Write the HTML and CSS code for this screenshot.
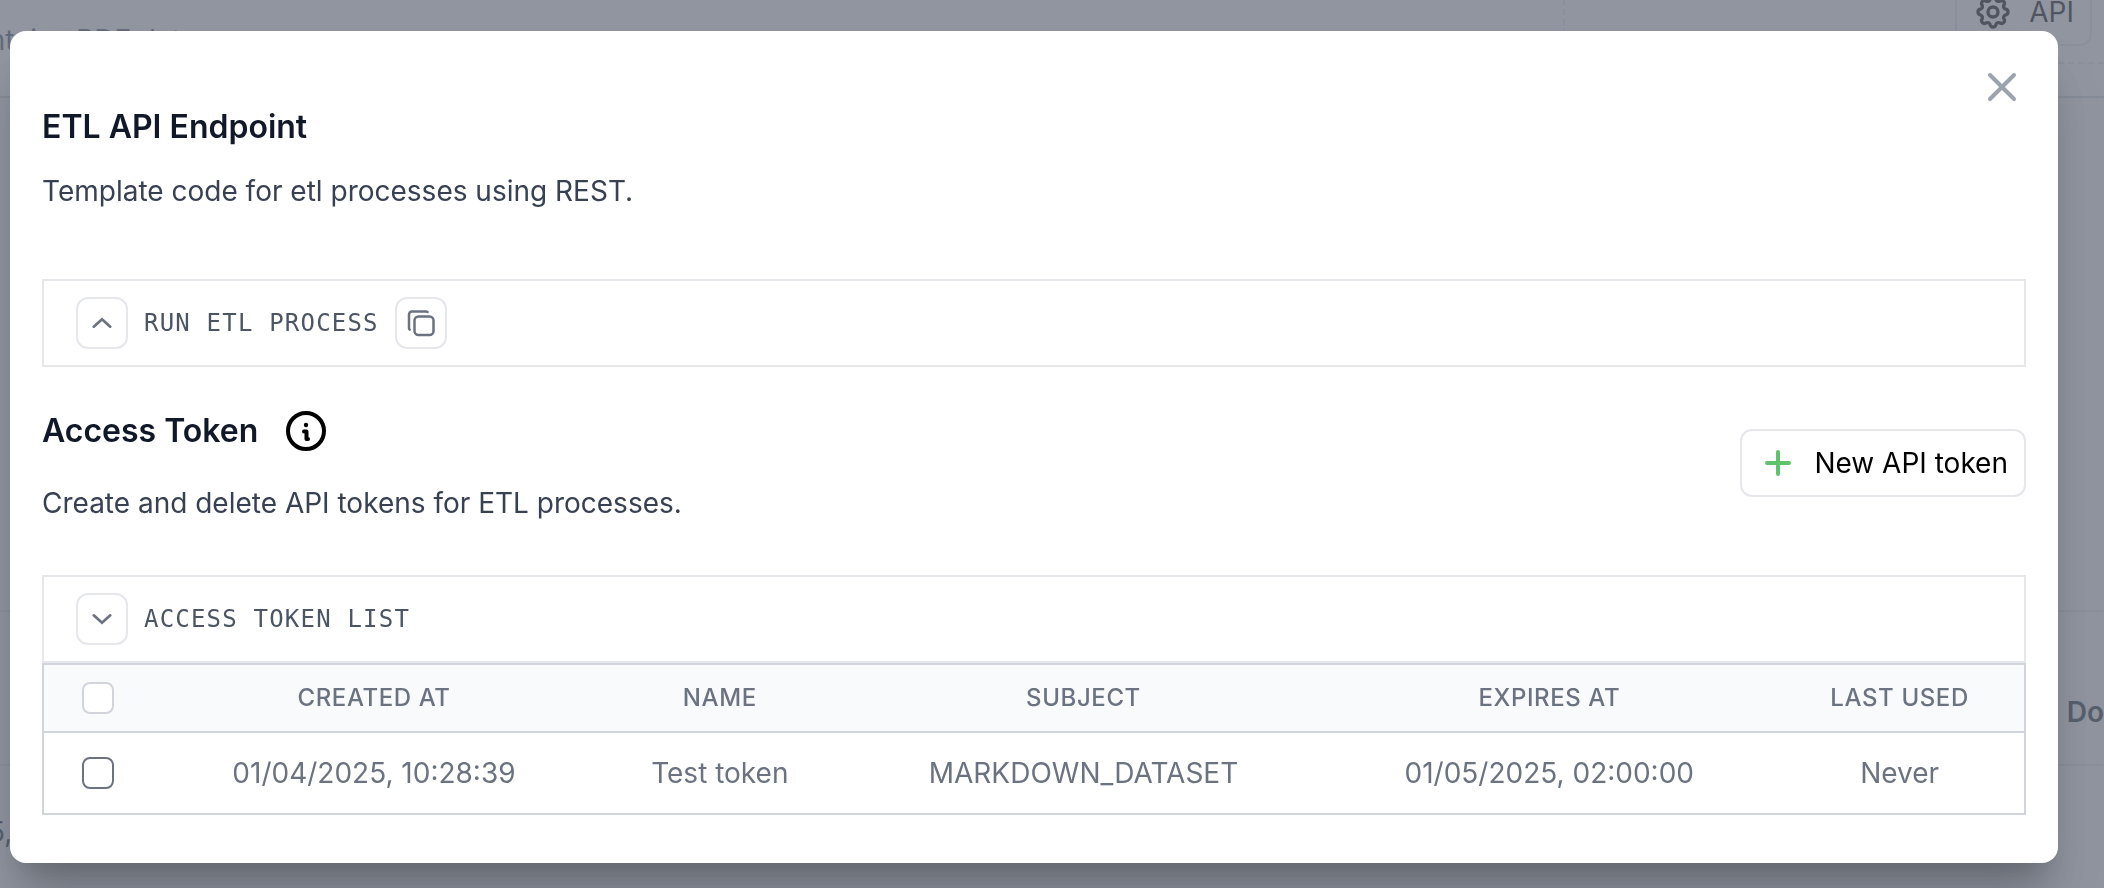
FILE: index.html
```
<!DOCTYPE html>
<html lang="en">
<head>
    <meta charset="UTF-8">
    <title>ETL API Endpoint</title>
    <link rel="stylesheet" href="styles.css">
</head>
<body>

<div class="page">
    <div class="page-header">
        <p class="page-description">contains PDF data</p>
        <div class="page-actions">
            <button class="btn" type="button">
                <svg class="icon-gear" viewBox="0 0 24 24" fill="none" stroke="currentColor" stroke-width="2">
                    <path d="M10.325 4.317c.426-1.756 2.924-1.756 3.35 0a1.724 1.724 0 002.573 1.066c1.543-.94 3.31.826 2.37 2.37a1.724 1.724 0 001.065 2.572c1.756.426 1.756 2.924 0 3.35a1.724 1.724 0 00-1.066 2.573c.94 1.543-.826 3.31-2.37 2.37a1.724 1.724 0 00-2.572 1.065c-.426 1.756-2.924 1.756-3.35 0a1.724 1.724 0 00-2.573-1.066c-1.543.94-3.31-.826-2.37-2.37a1.724 1.724 0 00-1.065-2.572c-1.756-.426-1.756-2.924 0-3.35a1.724 1.724 0 001.066-2.573c-.94-1.543.826-3.31 2.37-2.37.996.608 2.296.07 2.572-1.065z"/>
                    <circle cx="12" cy="12" r="3"/>
                </svg>
                API
            </button>
        </div>
    </div>
    <div class="page-content"></div>
    <div class="page-row page-row-head"><span>Do</span></div>
    <div class="page-row"><span class="page-date">5,</span></div>
</div>

<div class="overlay">
    <div class="modal" role="dialog" aria-labelledby="modal_title">
        <button class="close" type="button" aria-label="Close">
            <svg viewBox="0 0 24 24" fill="none" stroke="currentColor" stroke-width="2" stroke-linecap="round">
                <path d="M6 18L18 6M6 6l12 12"/>
            </svg>
        </button>

        <h3 class="title" id="modal_title">ETL API Endpoint</h3>
        <p class="text">Template code for etl processes using REST.</p>

        <div class="panel panel-code">
            <button class="btn-icon" type="button" aria-label="Show code">
                <svg class="icon-chevron" viewBox="0 0 24 24" fill="none" stroke="currentColor" stroke-width="3" stroke-linecap="round">
                    <path d="M3 16l9-8 9 8"/>
                </svg>
            </button>
            <span class="panel-label">Run ETL process</span>
            <button class="btn-icon" type="button" aria-label="Copy">
                <svg class="icon-copy" viewBox="0 0 32 32" fill="none" stroke="currentColor" stroke-width="2.5" stroke-linecap="round">
                    <rect x="9.500" y="9.500" width="19" height="18.500" rx="4"/>
                    <path d="M22.500 5a3 3 0 0 0-1.500-.5H7a3 3 0 0 0-3 3V21c0 .8.3 1.300.7 1.700"/>
                </svg>
            </button>
        </div>

        <div class="token-header">
            <div>
                <div class="token-title">
                    <h3 class="title">Access Token</h3>
                    <svg class="icon-info" viewBox="0 0 40 40" fill="none" stroke="currentColor" stroke-width="4" stroke-linecap="round" stroke-linejoin="round">
                        <circle cx="20" cy="20" r="18"/>
                        <circle cx="20" cy="14" r="2.200" fill="currentColor" stroke="none"/>
                        <path d="M18 20.500h2.500v7.500h1.500"/>
                    </svg>
                </div>
                <p class="text">Create and delete API tokens for ETL processes.</p>
            </div>
            <button class="btn" type="button">
                <svg class="icon-plus" viewBox="0 0 32 32" fill="none" stroke="currentColor" stroke-width="4" stroke-linecap="round">
                    <path d="M16 5v22M5 16h22"/>
                </svg>
                New API token
            </button>
        </div>

        <div class="panel">
            <button class="btn-icon" type="button" aria-label="Hide token list">
                <svg class="icon-chevron" viewBox="0 0 24 24" fill="none" stroke="currentColor" stroke-width="3" stroke-linecap="round">
                    <path d="M3 8l9 8 9-8"/>
                </svg>
            </button>
            <span class="panel-label">Access token list</span>
        </div>
        <table class="tokens">
            <colgroup>
                <col class="col-check">
                <col class="col-created">
                <col class="col-name">
                <col class="col-subject">
                <col class="col-expires">
                <col class="col-used">
            </colgroup>
            <thead>
            <tr>
                <th><input class="check" type="checkbox" aria-label="Select all tokens"></th>
                <th>Created at</th>
                <th>Name</th>
                <th>Subject</th>
                <th>Expires at</th>
                <th>Last used</th>
            </tr>
            </thead>
            <tbody>
            <tr>
                <td><input class="check" type="checkbox" aria-label="Select Test token"></td>
                <td>01/04/2025, 10:28:39</td>
                <td>Test token</td>
                <td>MARKDOWN_DATASET</td>
                <td>01/05/2025, 02:00:00</td>
                <td>Never</td>
            </tr>
            </tbody>
        </table>
    </div>
</div>

</body>
</html>
```

FILE: styles.css
```
* {
    box-sizing: border-box;
}
body {
    margin: 0;
    height: 100vh;
    overflow: hidden;
    font-family: Inter, sans-serif;
    font-size: 28px;
    line-height: 40px;
    color: #374151;
}
h3, p {
    margin: 0;
}
button {
    font: inherit;
    cursor: pointer;
}
svg {
    display: block;
    flex: none;
}

/* page behind the modal */
.page {
    margin-top: -40px;
    overflow: hidden;
    color: #1f2937;
}
.page-header {
    display: flex;
    align-items: flex-start;
    justify-content: space-between;
    height: 138px;
    border-bottom: 2px solid #d1d5db;
}
.page-description {
    margin: 60px 0 0 -44px;
    color: #4b5563;
}
.page-actions {
    display: flex;
    justify-content: flex-end;
    width: 541px;
    height: 104px;
    padding: 18px 12px 0;
    border-left: 2px dashed #e5e7eb;
    border-bottom: 2px dashed #e5e7eb;
}
.page-actions .btn {
    gap: 16px;
    padding: 0 16px;
    color: #000;
    background: transparent;
}
.page-content {
    height: 514px;
    background: #f9fafb;
    border-bottom: 2px solid #e5e7eb;
}
.page-row {
    display: flex;
    align-items: center;
    height: 154px;
    background: #f9fafb;
    border-bottom: 2px solid #e5e7eb;
}
.page-row-head {
    justify-content: flex-end;
    padding-top: 48px;
    font-weight: 600;
}
.page-date {
    margin: 0 0 20px -12px;
}

.overlay {
    position: fixed;
    inset: 0;
    padding: 31px 46px 25px 10px;
    background: rgba(107, 114, 128, 0.75);
}
.modal {
    position: relative;
    padding: 72px 32px 48px;
    background: #fff;
    border-radius: 16px;
    box-shadow: 0 40px 50px -10px rgba(0, 0, 0, 0.25), 0 16px 20px -12px rgba(0, 0, 0, 0.1);
}
.close {
    position: absolute;
    top: 32px;
    right: 32px;
    padding: 0;
    border: 0;
    background: none;
    color: #9ca3af;
}
.close svg {
    width: 48px;
    height: 48px;
}
.title {
    font-size: 32px;
    font-weight: 600;
    line-height: 48px;
    color: #111827;
}
.title + .text {
    margin-top: 20px;
}

.btn {
    display: flex;
    align-items: center;
    gap: 20px;
    height: 68px;
    padding: 0 16px 0 20px;
    border: 2px solid #e5e7eb;
    border-radius: 12px;
    background: #fff;
    color: #000;
}
.btn-icon {
    display: flex;
    align-items: center;
    justify-content: center;
    width: 52px;
    height: 52px;
    padding: 0;
    border: 2px solid #e5e7eb;
    border-radius: 12px;
    background: #fff;
    color: #6b7280;
}
.icon-chevron {
    width: 22px;
    height: 22px;
}
.icon-copy, .icon-plus {
    width: 32px;
    height: 32px;
}
.icon-gear {
    width: 40px;
    height: 40px;
}
.icon-plus {
    color: #5fc36b;
}
.icon-info {
    width: 40px;
    height: 40px;
    color: #000;
}

.panel {
    display: flex;
    align-items: center;
    gap: 16px;
    padding: 16px 32px;
    border: 2px solid #e5e7eb;
}
.panel-code {
    margin-top: 68px;
}
.panel-label {
    font-family: "DejaVu Sans Mono", monospace;
    font-size: 24px;
    line-height: 32px;
    letter-spacing: 0.05em;
    text-transform: uppercase;
    color: #4b5563;
}

.token-header {
    display: flex;
    align-items: center;
    justify-content: space-between;
    margin: 36px 0 52px;
}
.token-title {
    display: flex;
    align-items: center;
    gap: 28px;
    height: 56px;
    margin-bottom: 24px;
}

.tokens {
    width: 100%;
    table-layout: fixed;
    border-collapse: collapse;
    border: 2px solid #d1d5db;
    color: #6b7280;
}
.tokens th,
.tokens td {
    padding: 0;
    text-align: center;
}
.tokens th {
    height: 68px;
    font-size: 24px;
    font-weight: 500;
    line-height: 32px;
    letter-spacing: 0.025em;
    text-transform: uppercase;
    background: #f9fafb;
}
.tokens td {
    height: 82px;
    border-top: 2px solid #d1d5db;
}
.col-check {
    width: 5.5%;
}
.col-created {
    width: 22.4%;
}
.col-name {
    width: 12.5%;
}
.col-subject {
    width: 24.2%;
}
.col-expires {
    width: 22.8%;
}
.col-used {
    width: 12.6%;
}
.check {
    appearance: none;
    display: block;
    width: 32px;
    height: 32px;
    margin: 0 0 0 38px;
    border: 2px solid #6b7280;
    border-radius: 8px;
    background: #fff;
}
th .check {
    border-color: #d1d5db;
}
```
